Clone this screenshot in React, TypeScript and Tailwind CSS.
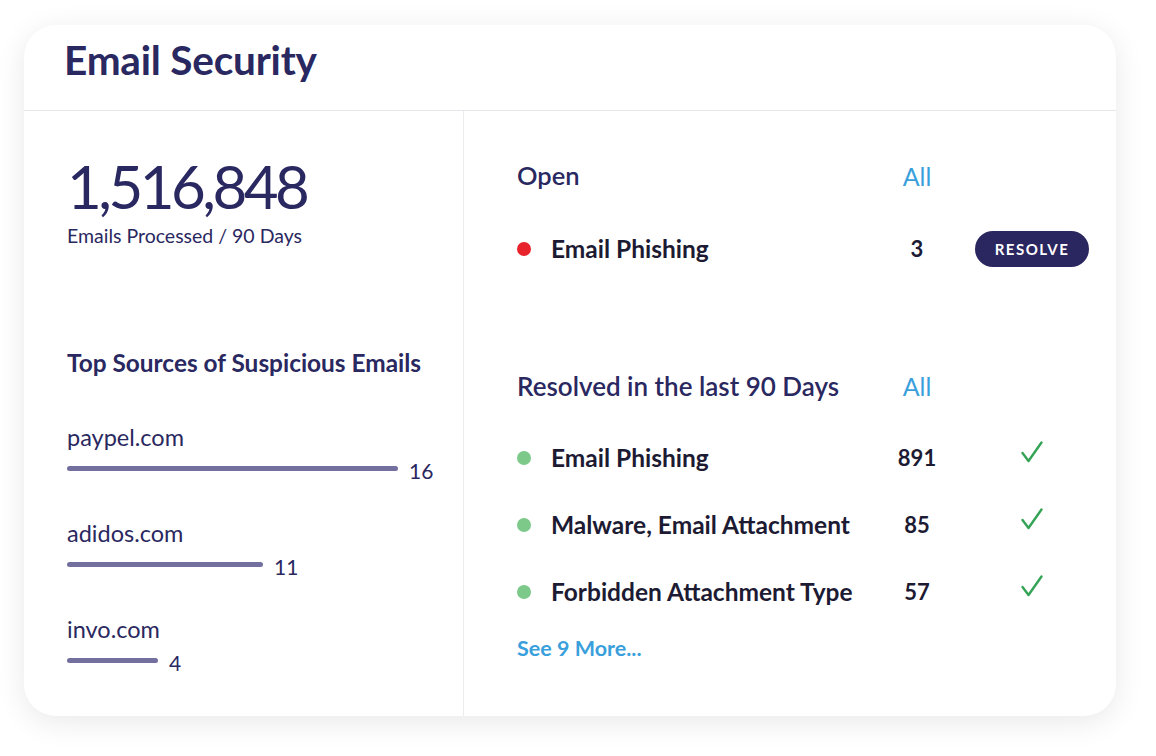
import React from 'react'

const SOURCES = [
  { name: 'paypel.com', count: 16, width: 331 },
  { name: 'adidos.com', count: 11, width: 196 },
  { name: 'invo.com', count: 4, width: 91 },
]

const RESOLVED = [
  { label: 'Email Phishing', count: 891 },
  { label: 'Malware, Email Attachment', count: 85 },
  { label: 'Forbidden Attachment Type', count: 57 },
]

function Check() {
  return (
    <svg width="24" height="24" viewBox="0 0 24 24" fill="none" className="-mt-3">
      <path d="M2.5 13 L8.5 21 L21.5 2.5" stroke="#34a356" strokeWidth="2.4" strokeLinecap="round" strokeLinejoin="round" />
    </svg>
  )
}

export default function App() {
  return (
    <div className="min-h-screen bg-white pt-[25px] pl-[24px]" style={{ fontFamily: 'Lato, "Liberation Sans", sans-serif' }}>
      <div className="w-[1092px] h-[691px] bg-white rounded-[32px] shadow-[0_6px_30px_rgba(0,0,0,0.09)] flex flex-col overflow-hidden">
        {/* Header */}
        <div className="h-[86px] border-b border-[#e6e6ea] flex items-center pl-[40px] shrink-0">
          <h1 className="text-[40.5px] font-bold text-[#2a2860] tracking-[-0.2px] leading-none -mt-[14px]">Email Security</h1>
        </div>

        <div className="flex flex-1">
          {/* Left column */}
          <div className="w-[440px] border-r border-[#ececef] pl-[43px] pt-[45px]">
            <div className="text-[60px] h-[60px] leading-[60px] text-[#2a2860] tracking-[-3.5px]">1,516,848</div>
            <div className="text-[19.5px] h-[20px] leading-[20px] text-[#2a2860] mt-[10px]">Emails Processed / 90 Days</div>

            <div className="text-[24.4px] h-[24px] leading-[24px] font-bold text-[#2a2860] mt-[105px]">Top Sources of Suspicious Emails</div>

            <div className="mt-[50px] flex flex-col gap-[41px]">
              {SOURCES.map((s) => (
                <div key={s.name}>
                  <div className="text-[23.5px] h-[24px] leading-[24px] text-[#2a2860]">{s.name}</div>
                  <div className="flex items-center gap-[11px] mt-[7px] h-[24px]">
                    <div className="h-[5px] rounded-full bg-[#736f9f]" style={{ width: s.width }} />
                    <span className="text-[21px] leading-none text-[#2a2860] mt-[4px]">{s.count}</span>
                  </div>
                </div>
              ))}
            </div>
          </div>

          {/* Right column */}
          <div className="flex-1 pl-[53px] pr-[27px] pt-[52px]">
            <div className="flex items-center h-[26px]">
              <div className="flex-1 text-[25.5px] font-semibold text-[#2a2860] leading-none">Open</div>
              <div className="w-[74px] text-center text-[25px] text-[#3aa0dc] leading-none">All</div>
              <div className="w-[114px] ml-[21px]" />
            </div>

            <div className="flex items-center h-[36px] mt-[42px]">
              <div className="flex-1 flex items-center">
                <span className="w-[14px] h-[14px] rounded-full bg-[#e8232b] mr-[20px]" />
                <span className="text-[24.5px] font-bold text-[#1d1b33] leading-none">Email Phishing</span>
              </div>
              <div className="w-[74px] text-center text-[22px] font-bold text-[#1d1b33] leading-none">3</div>
              <div className="w-[114px] ml-[21px]">
                <button className="w-[114px] h-[36px] rounded-full bg-[#2a265f] text-white text-[15px] font-bold tracking-[1.5px]">RESOLVE</button>
              </div>
            </div>

            <div className="flex items-center h-[26px] mt-[106px]">
              <div className="flex-1 text-[26px] font-semibold text-[#2a2860] leading-none">Resolved in the last 90 Days</div>
              <div className="w-[74px] text-center text-[25px] text-[#3aa0dc] leading-none">All</div>
              <div className="w-[114px] ml-[21px]" />
            </div>

            <div className="mt-[46px] flex flex-col gap-[41px]">
              {RESOLVED.map((r) => (
                <div key={r.label} className="flex items-center h-[26px]">
                  <div className="flex-1 flex items-center">
                    <span className="w-[14px] h-[14px] rounded-full bg-[#7cc98a] mr-[20px]" />
                    <span className="text-[24.5px] font-bold text-[#1d1b33] leading-none">{r.label}</span>
                  </div>
                  <div className="w-[74px] text-center text-[22px] font-bold text-[#1d1b33] leading-none">{r.count}</div>
                  <div className="w-[114px] ml-[21px] flex justify-center">
                    <Check />
                  </div>
                </div>
              ))}
            </div>

            <div className="mt-[32px] h-[22px] leading-[22px] text-[21.5px] font-bold text-[#3aa0dc]">See 9 More...</div>
          </div>
        </div>
      </div>
    </div>
  )
}
